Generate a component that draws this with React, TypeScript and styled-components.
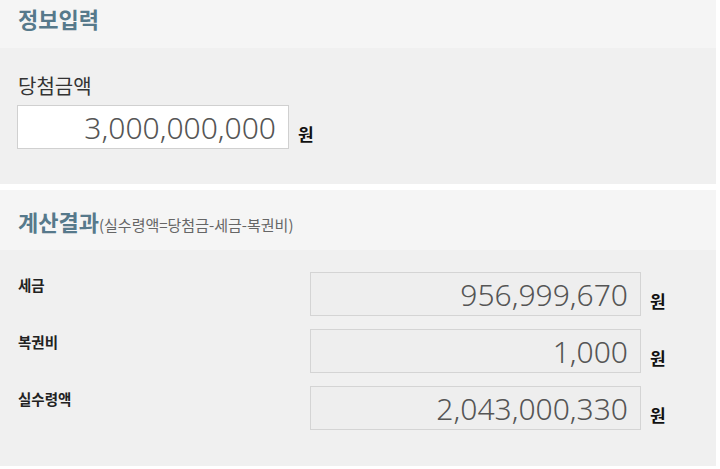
import React from "react";
import styled, { createGlobalStyle } from "styled-components";

const Global = createGlobalStyle`
  html, body { margin: 0; padding: 0; background: #ffffff; }
  body { font-family: "Noto Sans CJK KR", "Noto Sans", sans-serif; }
`;

const Page = styled.div`
  width: 716px;
  display: flex;
  flex-direction: column;
`;

const Header = styled.div<{ $h: number; $pt: number }>`
  height: ${(p) => p.$h}px;
  background: #f5f5f5;
  padding: ${(p) => p.$pt}px 0 0 18px;
  display: flex;
  align-items: flex-start;
  box-sizing: border-box;
`;

const Title = styled.h2`
  margin: 0;
  font-size: 22px;
  font-weight: 700;
  color: #56798b;
  letter-spacing: 0;
  line-height: 1;
`;

const Sub = styled.span`
  font-size: 15px;
  font-weight: 400;
  color: #666;
  letter-spacing: 0;
`;

const Body = styled.div<{ $h: number }>`
  height: ${(p) => p.$h}px;
  background: #f0f0f0;
  box-sizing: border-box;
`;

const Gap = styled.div`
  height: 6px;
  background: #fff;
`;

const InputBody = styled(Body)`
  padding: 24px 0 0 17px;
`;

const BigLabel = styled.div`
  font-size: 20px;
  color: #333;
  line-height: 28px;
  margin-left: 1px;
  margin-bottom: 5px;
`;

const Line = styled.div`
  display: flex;
  align-items: center;
`;

const Field = styled.div<{ $w: number; $bg: string; $bd: string }>`
  width: ${(p) => p.$w}px;
  height: 44px;
  box-sizing: border-box;
  background: ${(p) => p.$bg};
  border: 1px solid ${(p) => p.$bd};
  display: flex;
  align-items: center;
  justify-content: flex-end;
  padding-right: 12px;
  font-family: "Noto Sans", sans-serif;
  font-size: 30px;
  font-weight: 300;
  color: #555;
`;

const Won = styled.span<{ $ml: number }>`
  margin-left: ${(p) => p.$ml}px;
  margin-top: 12px;
  font-size: 17px;
  font-weight: 700;
  color: #111;
`;

const ResultBody = styled(Body)`
  padding: 22px 0 0 18px;
  display: flex;
  flex-direction: column;
  gap: 13px;
`;

const Row = styled.div`
  display: grid;
  grid-template-columns: 292px auto auto;
  justify-content: start;
  align-items: start;
`;

const RowLabel = styled.div`
  font-size: 14.5px;
  font-weight: 700;
  color: #222;
  line-height: 20px;
  padding-top: 3px;
`;

const RowWon = styled(Won)`
  margin-top: 16px;
`;

const results = [
  { label: "세금", value: "956,999,670" },
  { label: "복권비", value: "1,000" },
  { label: "실수령액", value: "2,043,000,330" },
];

export default function App() {
  return (
    <Page>
      <Global />
      <Header $h={48} $pt={7}>
        <Title>정보입력</Title>
      </Header>
      <InputBody $h={136}>
        <BigLabel>당첨금액</BigLabel>
        <Line>
          <Field $w={272} $bg="#ffffff" $bd="#d0d0d0">3,000,000,000</Field>
          <Won $ml={9}>원</Won>
        </Line>
      </InputBody>
      <Gap />
      <Header $h={60} $pt={20}>
        <Title>
          계산결과<Sub>(실수령액=당첨금-세금-복권비)</Sub>
        </Title>
      </Header>
      <ResultBody $h={216}>
        {results.map((r) => (
          <Row key={r.label}>
            <RowLabel>{r.label}</RowLabel>
            <Field $w={331} $bg="#eeeeee" $bd="#d4d4d4">{r.value}</Field>
            <RowWon $ml={9}>원</RowWon>
          </Row>
        ))}
      </ResultBody>
    </Page>
  );
}
